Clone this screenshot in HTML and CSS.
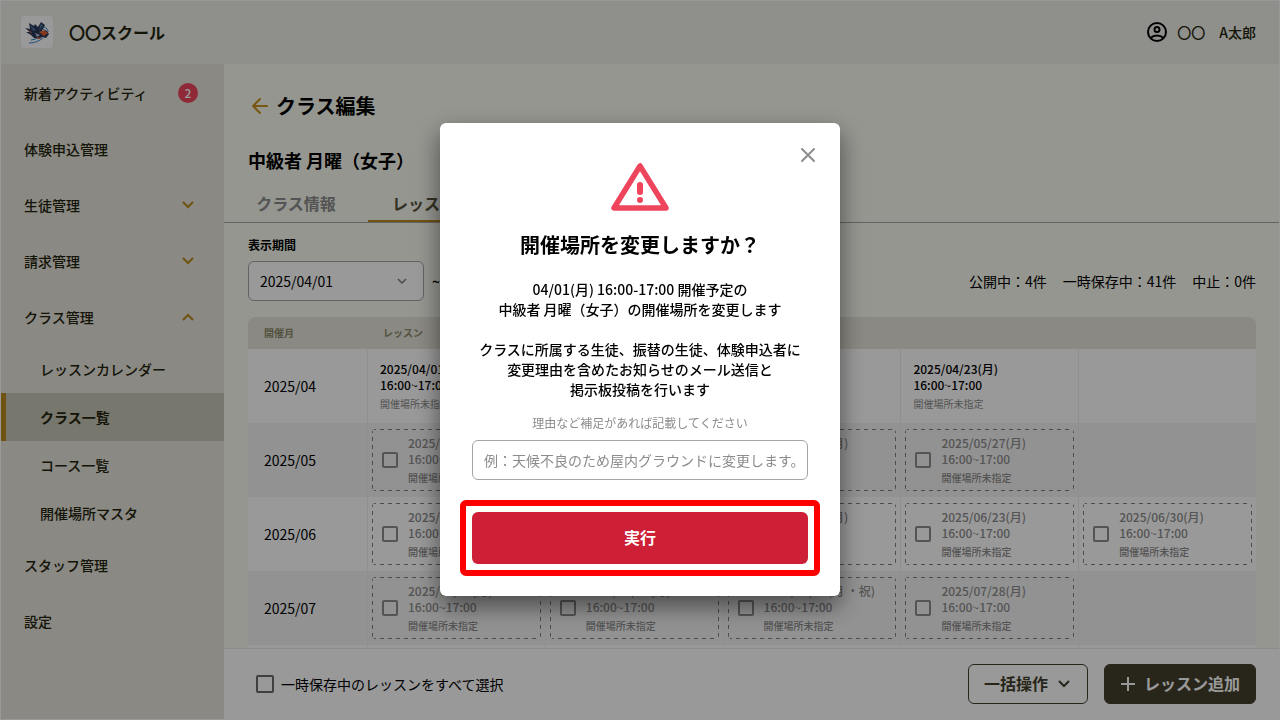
FILE: index.html
```html
<!DOCTYPE html>
<html lang="ja">
<head>
  <meta charset="UTF-8" />
  <meta name="viewport" content="width=device-width, initial-scale=1" />
  <title>クラス編集 | 〇〇スクール</title>
  <link rel="stylesheet" href="styles.css">
</head>
<body>
  <header class="header">
    <div class="brand">
      <svg class="logo" viewBox="0 0 32 32" aria-hidden="true">
        <rect width="32" height="32" rx="4" fill="#fff" />
        <path d="M8 7l5 3 1-2 3 3 3-5 4 3-2 4 4 2 2 3-3 4-4-1-3 2-5-1-3-3-5-3 4 0-5-4 5 1z" fill="#2b3a58" />
        <path d="M9 9l6 5-3 1zM20 7l2 3-4 4z" fill="#51719c" />
        <path d="M7 15l4 1-1 1zM18 16l5-2 4 3-4 3zM16 21l5 1-4 1z" fill="#e5602c" />
        <path d="M14 17l5 2-3 2zM21 13l3 2-3 0z" fill="#b9c4d6" />
        <path d="M8 27c6 0 10-2 14-5M10 24l5-1M23 11c3 1 4 3 4 5" fill="none" stroke="#3687d8" />
      </svg>
      <span class="brand-name">〇〇スクール</span>
    </div>
    <a href="#" class="user">
      <svg width="24" height="24" viewBox="0 0 24 24" fill="none" stroke="#000" stroke-width="2" aria-hidden="true">
        <circle cx="12" cy="12" r="9" />
        <circle cx="12" cy="9.500" r="2.500" />
        <path d="M5.500 18c3.500-3.500 9.500-3.500 13 0" />
      </svg>
      <span>〇〇　A太郎</span>
    </a>
  </header>

  <div class="layout">
    <nav class="sidebar">
      <a href="#" class="nav-item">新着アクティビティ<span class="badge">2</span></a>
      <a href="#" class="nav-item">体験申込管理</a>
      <a href="#" class="nav-item">生徒管理
        <svg class="chevron" viewBox="0 0 12 8"><path d="M1 1l5 5 5-5" /></svg>
      </a>
      <a href="#" class="nav-item">請求管理
        <svg class="chevron" viewBox="0 0 12 8"><path d="M1 1l5 5 5-5" /></svg>
      </a>
      <a href="#" class="nav-item">クラス管理
        <svg class="chevron" viewBox="0 0 12 8"><path d="M1 7l5-5 5 5" /></svg>
      </a>
      <a href="#" class="nav-item sub">レッスンカレンダー</a>
      <a href="#" class="nav-item sub active">クラス一覧</a>
      <a href="#" class="nav-item sub">コース一覧</a>
      <a href="#" class="nav-item sub">開催場所マスタ</a>
      <a href="#" class="nav-item">スタッフ管理</a>
      <a href="#" class="nav-item">設定</a>
    </nav>

    <main class="main">
      <div class="content">
        <div class="page-title">
          <a href="#" class="back" aria-label="戻る">
            <svg width="24" height="24" viewBox="0 0 24 24" fill="none" stroke="#c9931c" stroke-width="2" stroke-linecap="round" stroke-linejoin="round"><path d="M19 12H5M12 5l-7 7 7 7" /></svg>
          </a>
          <h1>クラス編集</h1>
        </div>
        <h2 class="class-name">中級者 月曜（女子）</h2>
        <div class="tabs">
          <a href="#" class="tab">クラス情報</a>
          <a href="#" class="tab selected">レッスン一覧</a>
        </div>

        <div class="filters">
          <div>
            <label class="filter-label" for="from">表示期間</label>
            <div class="period">
              <div class="select">
                <select id="from"><option>2025/04/01</option></select>
                <svg viewBox="0 0 12 8"><path d="M2 2l4 4 4-4" /></svg>
              </div>
              <span>~</span>
              <div class="select">
                <select aria-label="終了日"><option>2026/03/31</option></select>
                <svg viewBox="0 0 12 8"><path d="M2 2l4 4 4-4" /></svg>
              </div>
            </div>
          </div>
          <div class="counts">
            <span>公開中：4件</span>
            <span>一時保存中：41件</span>
            <span>中止：0件</span>
          </div>
        </div>

        <table class="lessons">
          <thead>
            <tr><th class="month">開催月</th><th colspan="5">レッスン</th></tr>
          </thead>
          <tbody>
            <tr>
              <td class="month">2025/04</td>
              <td><div class="lesson"><b>2025/04/01(月)<br>16:00~17:00</b><small>開催場所未指定</small></div></td>
              <td><div class="lesson"><b>2025/04/09(月)<br>16:00~17:00</b><small>開催場所未指定</small></div></td>
              <td><div class="lesson"><b>2025/04/16(月)<br>16:00~17:00</b><small>開催場所未指定</small></div></td>
              <td><div class="lesson"><b>2025/04/23(月)<br>16:00~17:00</b><small>開催場所未指定</small></div></td>
              <td></td>
            </tr>
            <tr>
              <td class="month">2025/05</td>
              <td><label class="lesson draft"><input type="checkbox"><span>2025/05/06(月)<br>16:00~17:00<small>開催場所未指定</small></span></label></td>
              <td><label class="lesson draft"><input type="checkbox"><span>2025/05/13(月)<br>16:00~17:00<small>開催場所未指定</small></span></label></td>
              <td><label class="lesson draft"><input type="checkbox"><span>2025/05/20(月)<br>16:00~17:00<small>開催場所未指定</small></span></label></td>
              <td><label class="lesson draft"><input type="checkbox"><span>2025/05/27(月)<br>16:00~17:00<small>開催場所未指定</small></span></label></td>
              <td></td>
            </tr>
            <tr>
              <td class="month">2025/06</td>
              <td><label class="lesson draft"><input type="checkbox"><span>2025/06/02(月)<br>16:00~17:00<small>開催場所未指定</small></span></label></td>
              <td><label class="lesson draft"><input type="checkbox"><span>2025/06/09(月)<br>16:00~17:00<small>開催場所未指定</small></span></label></td>
              <td><label class="lesson draft"><input type="checkbox"><span>2025/06/16(月)<br>16:00~17:00<small>開催場所未指定</small></span></label></td>
              <td><label class="lesson draft"><input type="checkbox"><span>2025/06/23(月)<br>16:00~17:00<small>開催場所未指定</small></span></label></td>
              <td><label class="lesson draft"><input type="checkbox"><span>2025/06/30(月)<br>16:00~17:00<small>開催場所未指定</small></span></label></td>
            </tr>
            <tr>
              <td class="month">2025/07</td>
              <td><label class="lesson draft"><input type="checkbox"><span>2025/07/07(月)<br>16:00~17:00<small>開催場所未指定</small></span></label></td>
              <td><label class="lesson draft"><input type="checkbox"><span>2025/07/14(月)<br>16:00~17:00<small>開催場所未指定</small></span></label></td>
              <td><label class="lesson draft"><input type="checkbox"><span>2025/07/21(月 ・祝)<br>16:00~17:00<small>開催場所未指定</small></span></label></td>
              <td><label class="lesson draft"><input type="checkbox"><span>2025/07/28(月)<br>16:00~17:00<small>開催場所未指定</small></span></label></td>
              <td></td>
            </tr>
            <tr><td class="month"></td><td></td><td></td><td></td><td></td><td></td></tr>
          </tbody>
        </table>
      </div>

      <div class="actions">
        <label class="select-all"><input type="checkbox">一時保存中のレッスンをすべて選択</label>
        <button type="button" class="btn outline">一括操作
          <svg width="16" height="16" viewBox="0 0 16 16"><path d="M3 6l5 5 5-5" /></svg>
        </button>
        <button type="button" class="btn dark">
          <svg width="16" height="16" viewBox="0 0 16 16"><path d="M8 2v14M1 9h14" /></svg>
          レッスン追加
        </button>
      </div>
    </main>
  </div>

  <div class="overlay">
    <form class="modal" role="dialog" aria-modal="true" aria-labelledby="modalTitle">
      <button type="button" class="close" aria-label="閉じる">
        <svg width="16" height="16" viewBox="0 0 16 16"><path d="M2 2l12 12M14 2L2 14" /></svg>
      </button>
      <svg class="warning" width="60" height="50" viewBox="0 0 60 50" aria-hidden="true">
        <path d="M30 4L4 46h52z" fill="none" stroke="#ee445c" stroke-width="5.500" stroke-linejoin="round" />
        <path d="M30 23v7" stroke="#ee445c" stroke-width="6" stroke-linecap="round" />
        <circle cx="30" cy="38" r="3" fill="#ee445c" />
      </svg>
      <h2 id="modalTitle">開催場所を変更しますか？</h2>
      <p>04/01(月) 16:00-17:00 開催予定の<br>中級者 月曜（女子）の開催場所を変更します</p>
      <p>クラスに所属する生徒、振替の生徒、体験申込者に<br>変更理由を含めたお知らせのメール送信と<br>掲示板投稿を行います</p>
      <label for="reason">理由など補足があれば記載してください</label>
      <input type="text" id="reason" placeholder="例：天候不良のため屋内グラウンドに変更します。">
      <button type="submit" class="submit">実行</button>
    </form>
  </div>
</body>
</html>
```
FILE: styles.css
```css
* { box-sizing: border-box; }
body {
  display: flex;
  flex-direction: column;
  height: 100vh;
  margin: 0;
  border: 1px solid #fff;
  overflow: hidden;
  font-family: "Noto Sans CJK JP", sans-serif;
  font-size: 14px;
  line-height: 20px;
  color: #000;
}
h1, h2, p { margin: 0; }
a { color: inherit; text-decoration: none; }
button, input, select { font: inherit; }
svg { flex: none; }

/* header */
.header {
  display: flex;
  flex: none;
  justify-content: space-between;
  align-items: center;
  height: 63px;
  padding: 0 23px 2px 20px;
  background: #eef0e8;
  color: #23230d;
}
.brand { display: flex; align-items: center; gap: 16px; }
.logo { width: 32px; height: 32px; }
.brand-name { font-size: 16px; font-weight: bold; }
.user { display: flex; align-items: center; gap: 8px; font-weight: 500; }

/* sidebar */
.layout { display: flex; flex: 1; min-height: 0; }
.sidebar {
  flex: none;
  width: 223px;
  padding-top: 1px;
  background: #e6e4da;
  color: #23230d;
}
.nav-item {
  display: flex;
  justify-content: space-between;
  align-items: center;
  height: 56px;
  padding: 0 26px 0 23px;
  font-weight: 500;
}
.nav-item.sub { height: 48px; padding-left: 39px; }
.nav-item.active {
  padding-left: 34px;
  border-left: 5px solid #b98a1e;
  background: #c7c7b6;
  font-weight: bold;
}
.badge {
  width: 20px;
  border-radius: 50%;
  background: #ee445c;
  color: #fff;
  font-size: 12px;
  text-align: center;
}
.chevron {
  width: 12px;
  height: 8px;
  margin-right: 4px;
  fill: none;
  stroke: #b98a1e;
  stroke-width: 2;
}

/* main */
.main { display: flex; flex: 1; flex-direction: column; min-width: 0; background: #f8faf0; }
.content { flex: 1; min-height: 0; padding: 26px 23px 0 24px; overflow: hidden; }
.page-title { display: flex; align-items: center; gap: 4px; height: 32px; }
.page-title h1 { font-size: 20px; }
.back { display: flex; }
.class-name { margin-top: 24px; font-size: 18px; line-height: 28px; }
.tabs {
  display: flex;
  margin: 10px -23px 0 -24px;
  border-bottom: 1px solid #a5a5a8;
}
.tab {
  width: 144px;
  height: 38px;
  border-bottom: 2px solid transparent;
  color: #8c8c8c;
  font-size: 16px;
  font-weight: bold;
  line-height: 38px;
  text-align: center;
}
.tab.selected { border-color: #b98a1e; color: #56523c; }

.filters {
  display: flex;
  justify-content: space-between;
  align-items: flex-end;
  margin: 14px 0 16px;
}
.filter-label { display: block; margin-bottom: 8px; font-size: 12px; font-weight: bold; line-height: 16px; }
.period { display: flex; align-items: center; gap: 8px; font-weight: 500; }
.select { position: relative; width: 176px; font-weight: normal; }
.select select {
  display: block;
  width: 100%;
  height: 40px;
  padding: 0 32px 0 11px;
  border: 1px solid #a5a5a8;
  border-radius: 6px;
  background: #fff;
  color: #000;
  appearance: none;
}
.select svg {
  position: absolute;
  top: 16px;
  right: 16px;
  width: 12px;
  height: 8px;
  fill: none;
  stroke: #7c7c80;
  stroke-width: 1.5;
}
.counts { display: flex; gap: 16px; line-height: 40px; }

.lessons { width: 100%; border-spacing: 0; table-layout: fixed; }
.lessons th {
  height: 32px;
  padding: 0 16px;
  background: #e6e4da;
  color: #8d8b6c;
  font-size: 10px;
  text-align: left;
}
.lessons th:first-child { border-radius: 8px 0 0 0; }
.lessons th:last-child { border-radius: 0 8px 0 0; }
.lessons td { height: 74px; padding: 6px 4px; border-left: 1px solid #efefef; background: #fff; }
.lessons tr:nth-child(even) td { background: #f4f4f4; }
.lessons .month { width: 119px; }
.lessons td.month { padding: 0 16px; border-left: none; }
.lesson {
  display: flex;
  flex-direction: column;
  justify-content: center;
  height: 62px;
  padding-left: 8px;
  font-size: 12px;
  line-height: 16px;
}
.lesson b { font-weight: 500; }
.lesson small { display: block; margin-top: 4px; color: #8c8c8c; font-size: 10px; line-height: 14px; }
.lesson.draft {
  flex-direction: row;
  justify-content: flex-start;
  align-items: center;
  gap: 10px;
  padding-left: 10px;
  border-radius: 4px;
  /* 8px dash pattern on each side */
  background:
    repeating-linear-gradient(90deg, #808080 0 4px, transparent 4px 8px) top / 100% 1px no-repeat,
    repeating-linear-gradient(90deg, #808080 0 4px, transparent 4px 8px) bottom / 100% 1px no-repeat,
    repeating-linear-gradient(#808080 0 4px, transparent 4px 8px) left / 1px 100% no-repeat,
    repeating-linear-gradient(#808080 0 4px, transparent 4px 8px) right / 1px 100% no-repeat;
  color: #8c8c8c;
  font-weight: 500;
}
input[type="checkbox"] {
  flex: none;
  width: 16px;
  height: 16px;
  margin: 0;
  border: 2px solid #8c8c8c;
  border-radius: 2px;
  appearance: none;
}

/* bottom bar */
.actions {
  display: flex;
  flex: none;
  align-items: center;
  gap: 16px;
  height: 71px;
  padding: 0 23px 0 32px;
  border-top: 1px solid #e6e6e6;
  background: #fff;
}
.select-all { display: flex; align-items: center; gap: 7px; margin-right: auto; }
.select-all input[type="checkbox"] { width: 18px; height: 18px; border-color: #6c6c6c; }
.btn {
  display: flex;
  align-items: center;
  gap: 8px;
  height: 40px;
  padding: 0 15px 2px;
  border: 1px solid #433f2d;
  border-radius: 6px;
  font-size: 16px;
  font-weight: bold;
}
.btn svg { fill: none; stroke: currentColor; stroke-width: 2; }
.btn.outline { background: #fff; color: #433f2d; }
.btn.dark { background: #433f2d; color: #fff; }

/* modal */
.overlay {
  position: fixed;
  inset: 0;
  display: flex;
  justify-content: center;
  align-items: center;
  padding-bottom: 1px;
  background: rgba(0, 0, 0, 0.4);
}
.modal {
  position: relative;
  display: flex;
  flex-direction: column;
  align-items: center;
  width: 400px;
  padding: 39px 32px 32px;
  border-radius: 6px;
  background: #fff;
  box-shadow: 0 10px 24px rgba(0, 0, 0, 0.5);
  text-align: center;
}
.close {
  position: absolute;
  top: 24px;
  right: 24px;
  display: flex;
  padding: 0;
  border: none;
  background: none;
}
.close svg { stroke: #8c8c8c; stroke-width: 2; stroke-linecap: round; }
.modal h2 { margin: 18px 0 19px; font-size: 20px; line-height: 30px; }
.modal p { margin-bottom: 20px; font-weight: 500; }
.modal label { margin: -4px 0 9px; color: #8c8c8c; font-size: 12px; line-height: 16px; }
.modal input {
  width: 100%;
  height: 40px;
  padding: 0 11px;
  border: 1px solid #a5a5a8;
  border-radius: 6px;
}
.modal input::placeholder { color: #8c8c8c; }
.submit {
  position: relative;
  width: 100%;
  height: 52px;
  margin-top: 32px;
  padding: 0 0 2px;
  border: none;
  border-radius: 6px;
  background: #cd1f35;
  color: #fff;
  font-size: 16px;
  font-weight: bold;
}
.submit::after {
  content: "";
  position: absolute;
  inset: -12px;
  border: 6px solid #f00;
  border-radius: 6px;
}
```
